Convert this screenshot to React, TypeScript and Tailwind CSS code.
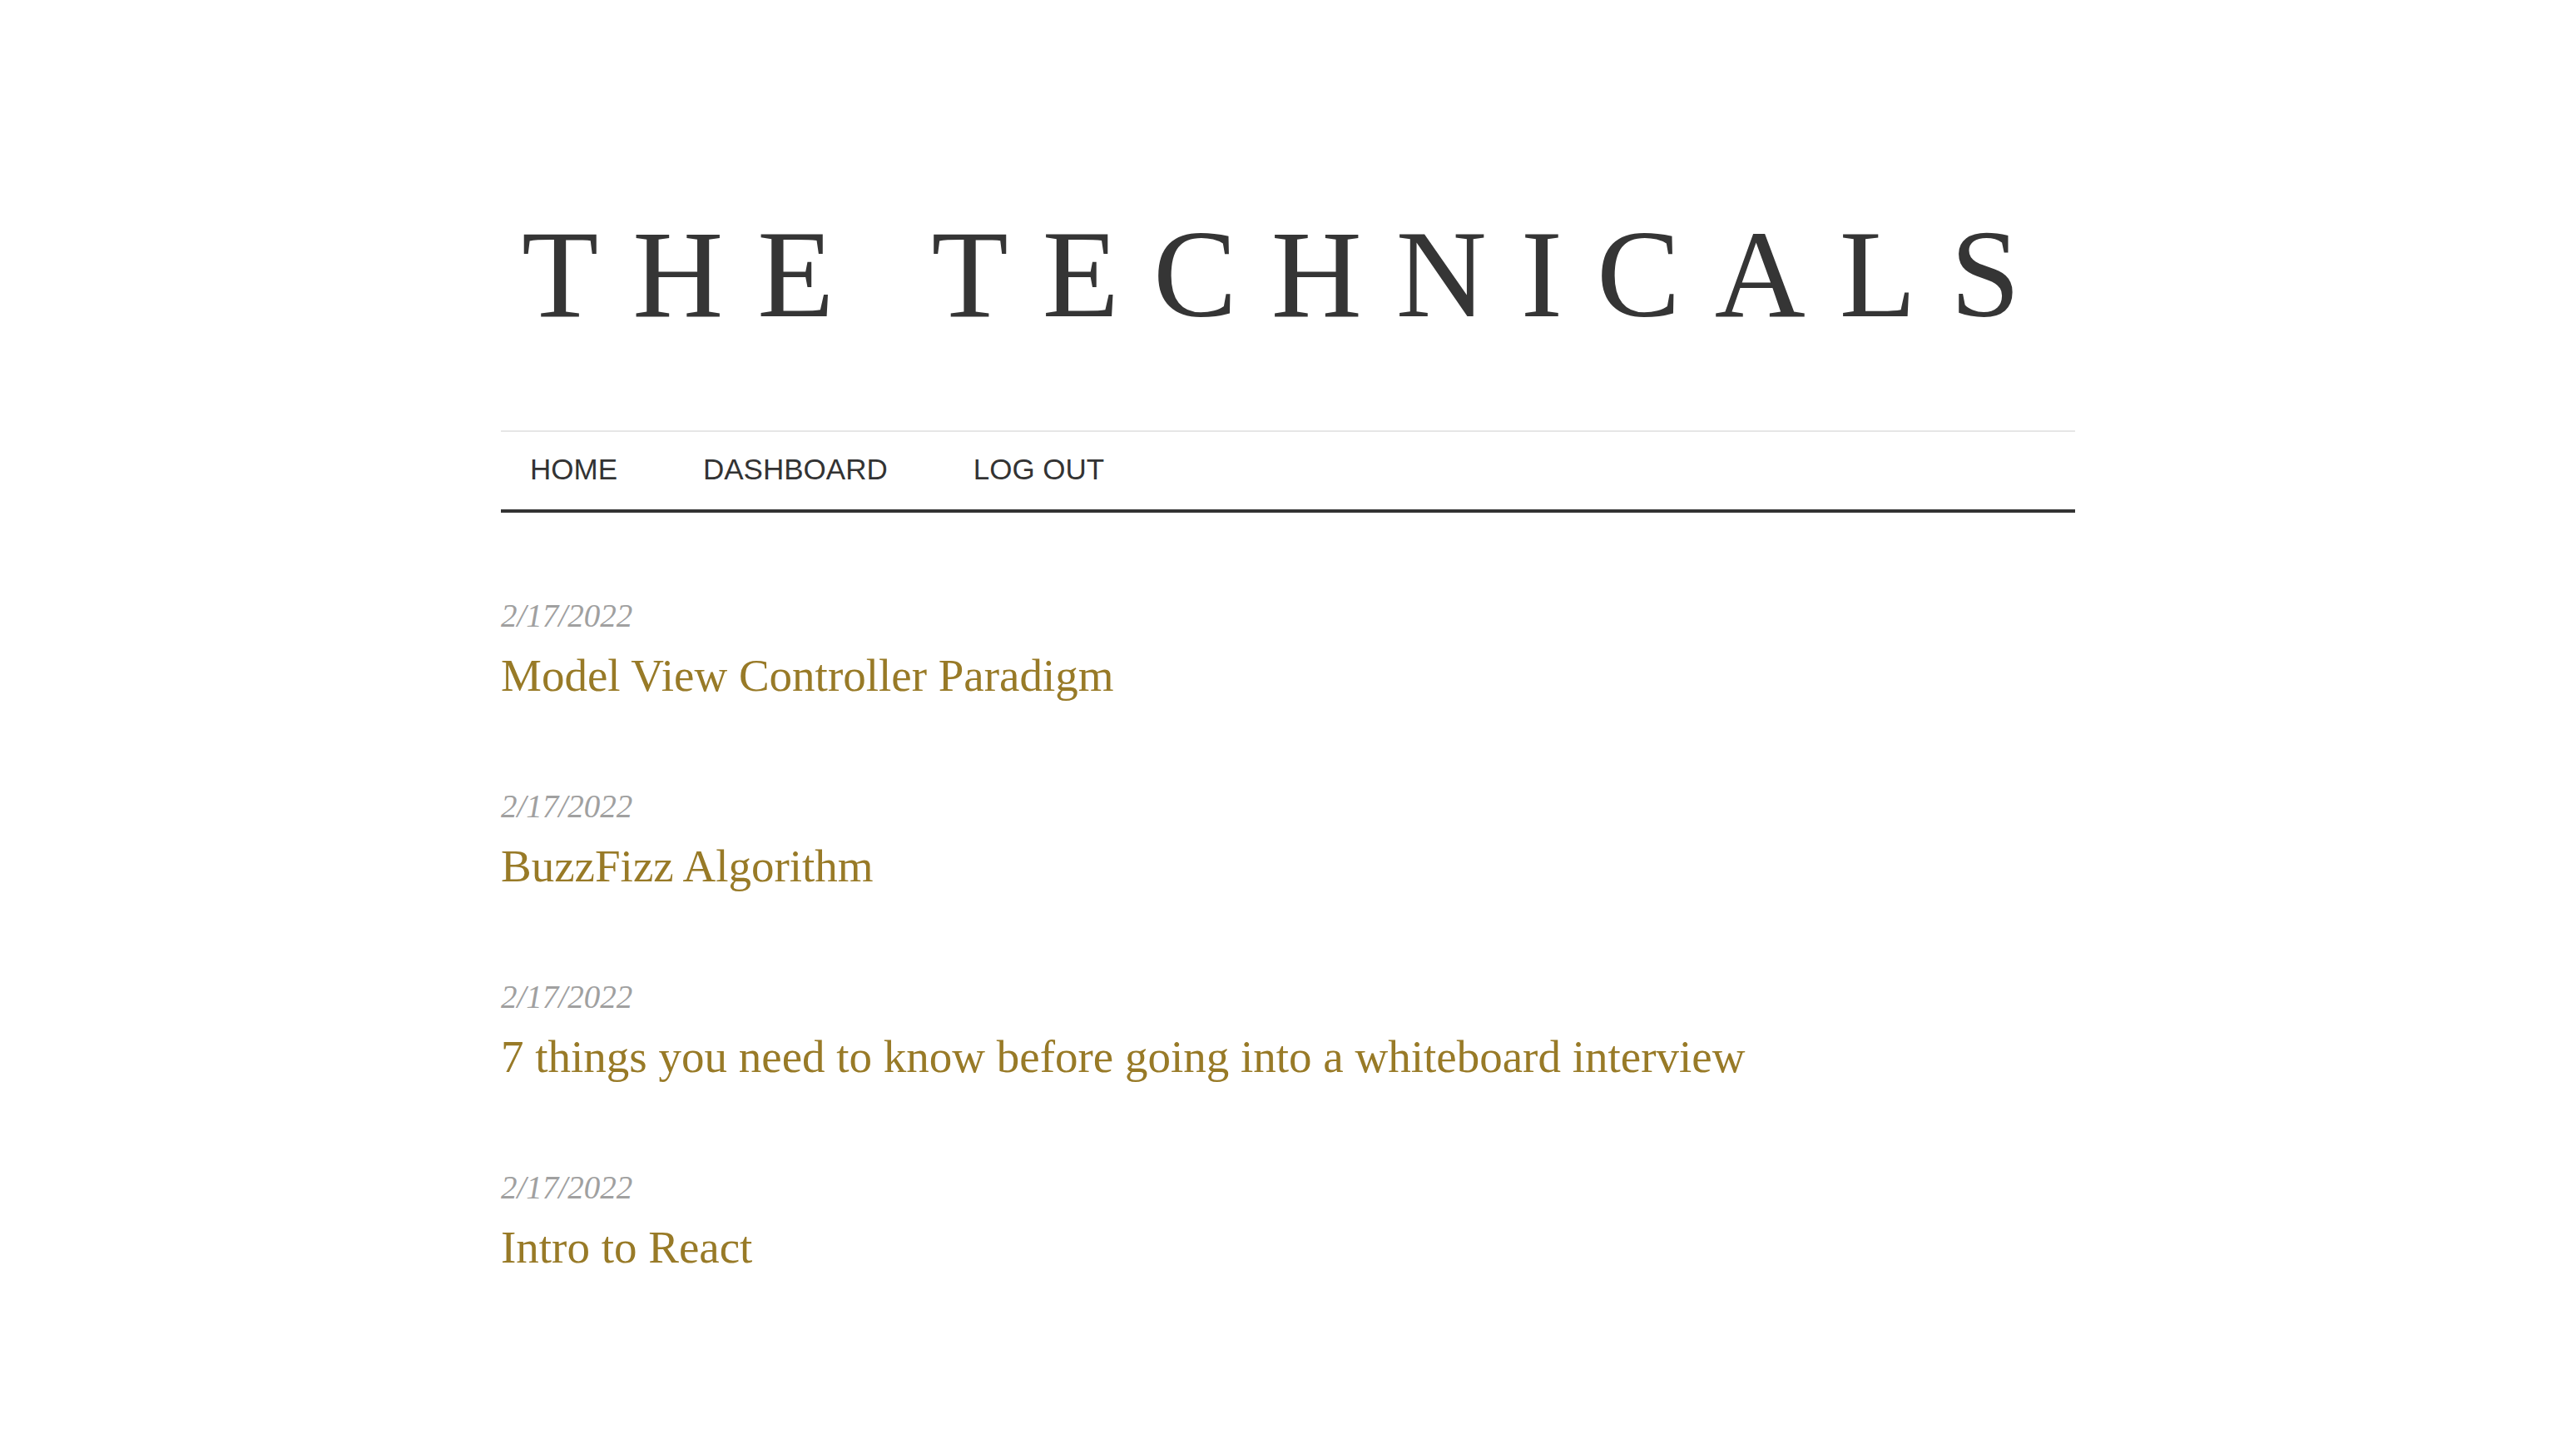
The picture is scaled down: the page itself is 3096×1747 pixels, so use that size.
import React from 'react';

const posts = [
  { date: '2/17/2022', title: 'Model View Controller Paradigm' },
  { date: '2/17/2022', title: 'BuzzFizz Algorithm' },
  { date: '2/17/2022', title: '7 things you need to know before going into a whiteboard interview' },
  { date: '2/17/2022', title: 'Intro to React' },
];

const links = ['HOME', 'DASHBOARD', 'LOG OUT'];

const App = () => {
  return (
    <div className="min-h-screen w-full bg-white">
      <div className="w-[1892px] mx-auto pt-[254px] pb-[200px]">
        {/* Masthead */}
        <h1 className="text-center text-[151px] leading-none tracking-[41px] font-normal text-[#353535] font-['Liberation_Serif',serif]">
          THE TECHNICALS
        </h1>

        {/* Nav */}
        <nav className="mt-[112px] border-t-2 border-[#e6e6e6] border-b-4 border-b-[#333]">
          <ul className="flex gap-[103px] pl-[35px]">
            {links.map((l) => (
              <li key={l}>
                <a
                  href="#"
                  className="block pt-[27px] pb-[31px] text-[35px] leading-none text-[#333] font-['Liberation_Sans',Arial,sans-serif]"
                >
                  {l}
                </a>
              </li>
            ))}
          </ul>
        </nav>

        {/* Posts */}
        <main className="pt-[104px] flex flex-col gap-[110px]">
          {posts.map((p, i) => (
            <article key={i}>
              <p className="text-[39px] leading-none italic text-[#a0a0a0] font-['Liberation_Serif',serif] mb-[25px]">
                {p.date}
              </p>
              <a
                href="#"
                className="block text-[55px] leading-none text-[#987a27] font-['Liberation_Serif',serif]"
              >
                {p.title}
              </a>
            </article>
          ))}
        </main>
      </div>
    </div>
  );
};

export default App;
